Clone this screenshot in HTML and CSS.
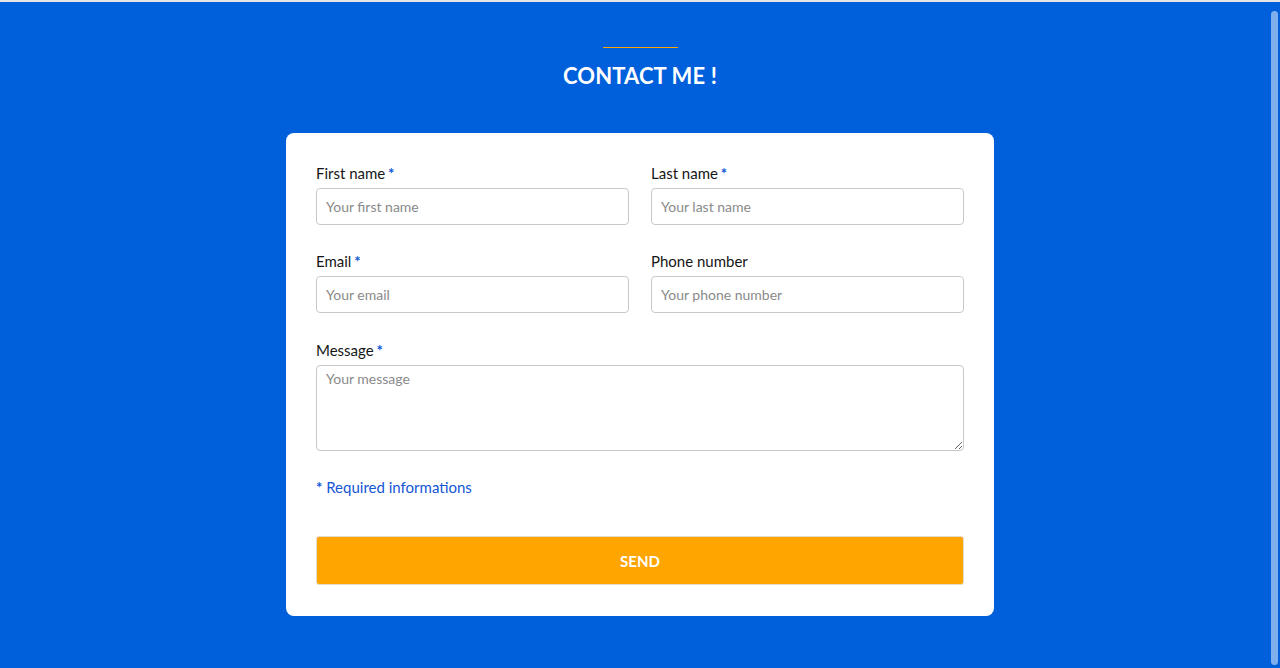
FILE: index.html
```html
<!DOCTYPE html>
<html lang="en">
<head>
<meta charset="utf-8">
<title>Contact me</title>
<link rel="stylesheet" href="styles.css">
</head>
<body>
<main class="page">
  <section class="contact">
    <div class="accent"></div>
    <h1 class="title">CONTACT ME !</h1>
    <form class="card">
      <div class="row">
        <div class="field">
          <label class="label">First name <span class="req">*</span></label>
          <input class="input" type="text" placeholder="Your first name">
        </div>
        <div class="field">
          <label class="label">Last name <span class="req">*</span></label>
          <input class="input" type="text" placeholder="Your last name">
        </div>
      </div>
      <div class="row">
        <div class="field">
          <label class="label">Email <span class="req">*</span></label>
          <input class="input" type="email" placeholder="Your email">
        </div>
        <div class="field">
          <label class="label">Phone number</label>
          <input class="input" type="tel" placeholder="Your phone number">
        </div>
      </div>
      <div class="field field-full">
        <label class="label">Message <span class="req">*</span></label>
        <textarea class="textarea" placeholder="Your message"></textarea>
      </div>
      <p class="note"><span class="note-star">*</span> Required informations</p>
      <button class="send" type="button">SEND</button>
    </form>
  </section>
</main>
<div class="scroll-thumb"></div>
</body>
</html>
```
FILE: styles.css
```css
html, body {
  margin: 0;
  padding: 0;
  height: 100%;
  overflow: hidden;
}

body {
  background: #005fdb;
  font-family: Lato, "Open Sans", Arial, sans-serif;
  border-top: 2px solid #e4e4e4;
  box-sizing: border-box;
}

.page {
  display: flex;
  justify-content: center;
}

.contact {
  width: 708px;
  padding-top: 45px;
  display: flex;
  flex-direction: column;
  align-items: center;
}

.accent {
  width: 75px;
  height: 0;
  border-top: 1px solid #ffa500;
}

.title {
  margin: 13px 0 0;
  color: #ffffff;
  font-size: 22px;
  line-height: 29px;
  font-weight: 700;
  letter-spacing: 0.1px;
}

.card {
  margin-top: 43px;
  width: 100%;
  box-sizing: border-box;
  background: #ffffff;
  border-radius: 8px;
  padding: 31px 30px 31px;
  display: flex;
  flex-direction: column;
}

.row {
  display: grid;
  grid-template-columns: 1fr 1fr;
  column-gap: 22px;
  margin-bottom: 27px;
}

.field {
  display: flex;
  flex-direction: column;
}

.field-full {
  margin-top: 1px;
  margin-bottom: 27px;
}

.label {
  font-size: 15px;
  line-height: 19px;
  color: #161616;
  margin-bottom: 5px;
}

.req {
  color: #0a55d6;
  font-weight: 700;
  margin-left: -1px;
}

.input,
.textarea {
  font-family: Lato, "Open Sans", Arial, sans-serif;
  font-size: 14px;
  color: #333;
  border: 1px solid #c8c8c8;
  border-radius: 4px;
  padding: 0 9px;
  box-sizing: border-box;
  outline: none;
  background: #fff;
}

.input {
  height: 37px;
}

.textarea {
  height: 86px;
  padding-top: 4px;
  resize: vertical;
  display: block;
}

.input::placeholder,
.textarea::placeholder {
  color: #8a8a8a;
}

.note {
  margin: 0;
  font-size: 15px;
  line-height: 19px;
  color: #1556d6;
}

.note-star {
  font-weight: 700;
}

.send {
  margin-top: 39px;
  height: 49px;
  width: 100%;
  background: #ffa500;
  border: 1px solid #e6dccb;
  border-radius: 3px;
  color: #ffffff;
  font-family: Lato, "Open Sans", Arial, sans-serif;
  font-size: 15px;
  font-weight: 700;
  cursor: pointer;
}

.scroll-thumb {
  position: fixed;
  right: 2px;
  top: 11px;
  bottom: 3px;
  width: 7px;
  border-radius: 4px;
  background: rgba(255, 255, 255, 0.5);
}
```
